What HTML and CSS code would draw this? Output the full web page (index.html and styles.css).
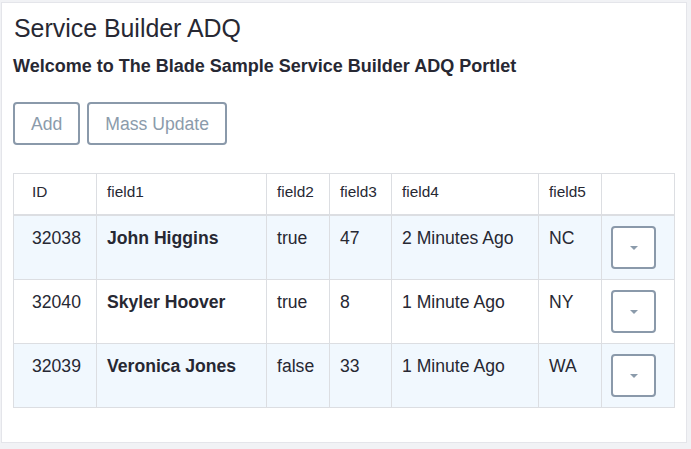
FILE: index.html
```html
<!DOCTYPE html>
<html>
<head>
<meta charset="utf-8">
<link rel="stylesheet" href="styles.css">
</head>
<body>
<div class="portlet">
  <h1 class="title">Service Builder ADQ</h1>
  <p class="welcome">Welcome to The Blade Sample Service Builder ADQ Portlet</p>
  <div class="actions">
    <button class="btn">Add</button>
    <button class="btn">Mass Update</button>
  </div>
  <table class="grid">
    <colgroup>
      <col class="c-id"><col class="c-f1"><col class="c-f2"><col class="c-f3"><col class="c-f4"><col class="c-f5"><col class="c-act">
    </colgroup>
    <thead>
      <tr><th class="first">ID</th><th>field1</th><th>field2</th><th>field3</th><th>field4</th><th>field5</th><th></th></tr>
    </thead>
    <tbody>
      <tr class="alt">
        <td class="first">32038</td><td class="name">John Higgins</td><td>true</td><td>47</td><td>2 Minutes Ago</td><td>NC</td>
        <td><button class="dd"><span class="caret"></span></button></td>
      </tr>
      <tr>
        <td class="first">32040</td><td class="name">Skyler Hoover</td><td>true</td><td>8</td><td>1 Minute Ago</td><td>NY</td>
        <td><button class="dd"><span class="caret"></span></button></td>
      </tr>
      <tr class="alt">
        <td class="first">32039</td><td class="name">Veronica Jones</td><td>false</td><td>33</td><td>1 Minute Ago</td><td>WA</td>
        <td><button class="dd"><span class="caret"></span></button></td>
      </tr>
    </tbody>
  </table>
</div>
</body>
</html>
```

FILE: styles.css
```css
html, body {
  margin: 0;
  padding: 0;
  background: #f1f2f5;
}
body {
  font-family: "Liberation Sans", Arial, sans-serif;
  color: #272833;
  padding: 2px 4px 0 1px;
}
.portlet {
  background: #fff;
  border: 1px solid #e4e5ea;
  width: 686px;
  height: 441px;
  box-sizing: border-box;
  padding: 11px 12px 0 11px;
}
.title {
  margin: 0;
  font-size: 24.9px;
  font-weight: normal;
  line-height: 29px;
  padding-left: 1px;
  color: #272833;
}
.welcome {
  margin: 10px 0 0 0;
  font-size: 18px;
  font-weight: bold;
  line-height: 26px;
}
.actions {
  display: flex;
  gap: 7px;
  margin-top: 23px;
}
.btn {
  font-family: "Liberation Sans", Arial, sans-serif;
  font-size: 17.6px;
  line-height: 26px;
  color: #8b9bab;
  background: #fff;
  border: 2px solid #8a99aa;
  border-radius: 4px;
  height: 43px;
  padding: 0 16px;
  box-sizing: border-box;
}
.grid {
  margin-top: 28px;
  border-collapse: collapse;
  table-layout: fixed;
  width: 661px;
}
.c-id { width: 83px; }
.c-f1 { width: 170px; }
.c-f2 { width: 63px; }
.c-f3 { width: 62px; }
.c-f4 { width: 147px; }
.c-f5 { width: 63px; }
.c-act { width: 73px; }
.grid th, .grid td {
  border: 1px solid #dcdee2;
  text-align: left;
  vertical-align: top;
  padding: 10px 10px;
}
.grid th {
  font-size: 15.4px;
  font-weight: normal;
  line-height: 22px;
  padding-top: 7px;
  padding-bottom: 11px;
  border-bottom: 2px solid #dcdee2;
}
.grid td {
  font-size: 17.6px;
  line-height: 24px;
  height: 43px;
}
.grid .first {
  padding-left: 18px;
}
.grid .name {
  font-weight: bold;
}
.grid tr.alt td {
  background: #f1f8fe;
}
.dd {
  width: 45px;
  height: 43px;
  margin-left: -1px;
  background: #fff;
  border: 2px solid #8a99aa;
  border-radius: 4px;
  padding: 0;
  display: flex;
  align-items: center;
  justify-content: center;
}
.caret {
  width: 0;
  height: 0;
  border-left: 4px solid transparent;
  border-right: 4px solid transparent;
  border-top: 4px solid #8b9bab;
  margin-top: 1px;
}
```
